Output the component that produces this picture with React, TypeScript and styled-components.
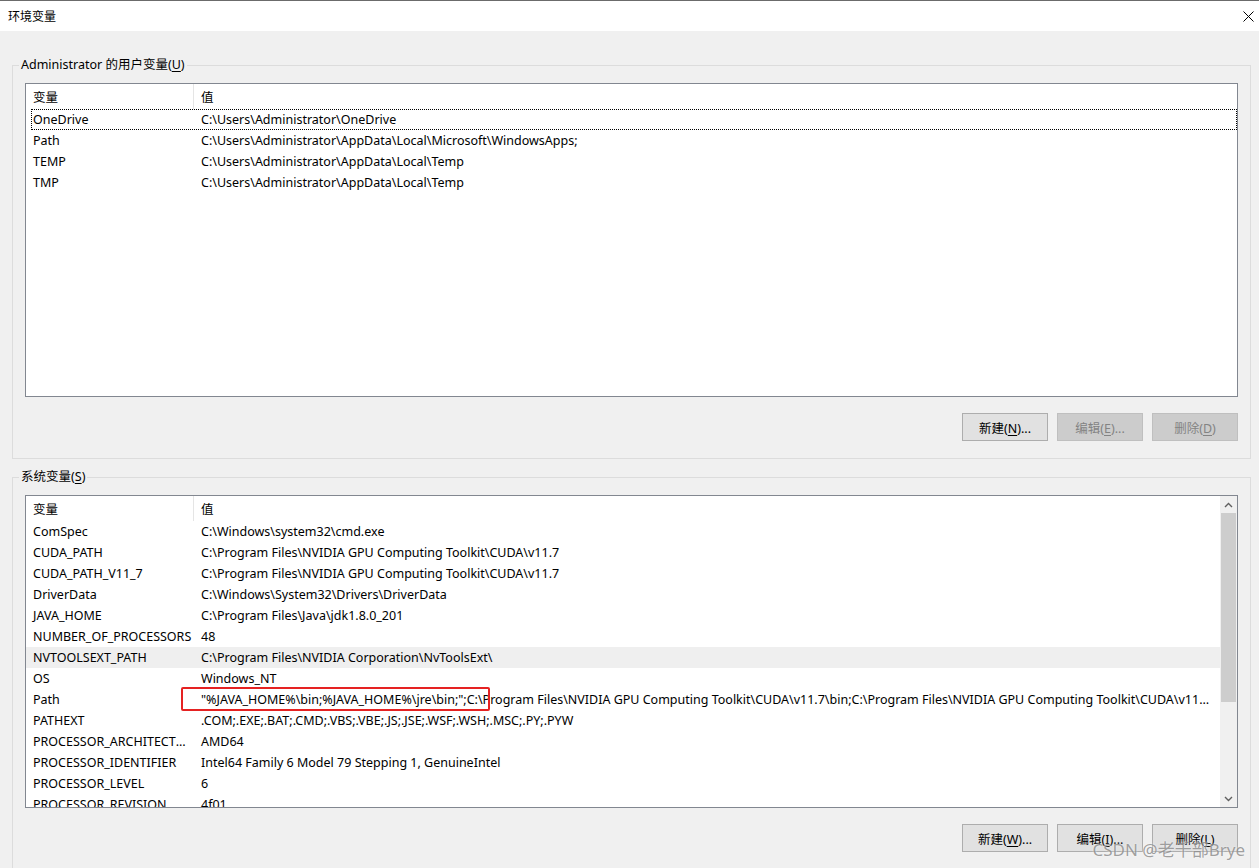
import React from "react";
import styled, { createGlobalStyle } from "styled-components";

const GlobalStyle = createGlobalStyle`
  html, body {
    margin: 0;
    padding: 0;
    background: #f0f0f0;
    overflow: hidden;
  }
  body {
    font-family: "Noto Sans", "Noto Sans CJK SC", sans-serif;
    font-size: 12.5px;
    color: #000;
  }
`;

const Window = styled.div`
  position: relative;
  width: 1259px;
  height: 868px;
  display: flex;
  flex-direction: column;
  overflow: hidden;
  background: #f0f0f0;
`;

const TitleBar = styled.div`
  height: 31px;
  flex-shrink: 0;
  box-sizing: border-box;
  border-top: 1px solid #6b6b6b;
  background: #fff;
  display: flex;
  align-items: center;
  justify-content: space-between;
  padding: 0 5px 0 8px;
  font-size: 12px;
`;

const CloseButton = styled.div`
  width: 12px;
  height: 12px;
  display: flex;
  align-items: center;
  justify-content: center;
`;

const Body = styled.div`
  flex-shrink: 0;
  padding: 26px 8px 0 12px;
  display: flex;
  flex-direction: column;
  gap: 10px;
`;

const GroupBox = styled.fieldset`
  margin: 0;
  min-width: 0;
  border: 1px solid #dcdcdc;
  padding: 10px 12px 17px 12px;
  display: flex;
  flex-direction: column;
`;

const Legend = styled.legend`
  font-size: 12.5px;
  line-height: 16px;
  padding: 0 2px;
  margin-left: -6px;
`;

const Key = styled.span`
  text-decoration: underline;
  text-underline-offset: 2px;
`;

const List = styled.div<{ height: number }>`
  height: ${({ height }) => height}px;
  flex-shrink: 0;
  box-sizing: border-box;
  border: 1px solid #828790;
  background: #fff;
  display: flex;
  overflow: hidden;
`;

const ListContent = styled.div`
  flex: 1;
  min-width: 0;
  display: flex;
  flex-direction: column;
`;

const HeaderRow = styled.div`
  height: 25px;
  display: grid;
  grid-template-columns: 168px 1fr;
  flex-shrink: 0;
`;

const HeaderCell = styled.div<{ divider?: boolean }>`
  padding-left: 7px;
  display: flex;
  align-items: center;
  border-right: ${({ divider }) => (divider ? "1px solid #e5e5e5" : "none")};
`;

const Row = styled.div<{ focused?: boolean; highlighted?: boolean }>`
  position: relative;
  height: 21px;
  flex-shrink: 0;
  display: grid;
  grid-template-columns: 168px 1fr;
  align-items: center;
  background: ${({ highlighted }) => (highlighted ? "#efefef" : "transparent")};

  &::before {
    content: "";
    display: ${({ focused }) => (focused ? "block" : "none")};
    position: absolute;
    left: 5px;
    right: 0;
    top: 0;
    bottom: 0;
    border: 1px dotted #000;
  }
`;

const Cell = styled.div`
  padding: 0 1px 0 7px;
  white-space: nowrap;
  overflow: hidden;
  text-overflow: ellipsis;
`;

const ValueCell = styled(Cell)`
  padding-right: 10px;
`;

const Marker = styled.div`
  position: absolute;
  left: 155px;
  top: -2px;
  width: 309px;
  height: 24px;
  box-sizing: border-box;
  border: 2px solid #e52222;
  border-radius: 2px;
  pointer-events: none;
`;

const ScrollBar = styled.div`
  width: 17px;
  flex-shrink: 0;
  background: #f0f0f0;
  display: flex;
  flex-direction: column;
`;

const ScrollArrow = styled.div`
  height: 17px;
  display: flex;
  align-items: center;
  justify-content: center;
  flex-shrink: 0;
`;

const ScrollTrack = styled.div`
  flex: 1;
  display: flex;
  flex-direction: column;
`;

const Thumb = styled.div`
  margin: 0 1px;
  height: 189px;
  background: #cdcdcd;
`;

const ButtonRow = styled.div`
  margin-top: 16px;
  display: flex;
  justify-content: flex-end;
  gap: 9px;
`;

const Button = styled.button`
  width: 86px;
  height: 28px;
  box-sizing: border-box;
  font-family: inherit;
  font-size: 12.5px;
  color: #000;
  background: #e1e1e1;
  border: 1px solid #adadad;
  padding: 0;

  &:disabled {
    color: #838383;
    background: #cccccc;
    border-color: #bfbfbf;
  }
`;

const Watermark = styled.div`
  position: absolute;
  right: 14px;
  bottom: 7px;
  font-size: 17px;
  color: rgba(120, 120, 120, 0.7);
  text-shadow: 0 0 2px rgba(255, 255, 255, 0.8);
  pointer-events: none;
`;

type Variable = { name: string; value: string; focused?: boolean; highlighted?: boolean; marked?: boolean };

const userVars: Variable[] = [
  { name: "OneDrive", value: "C:\\Users\\Administrator\\OneDrive", focused: true },
  { name: "Path", value: "C:\\Users\\Administrator\\AppData\\Local\\Microsoft\\WindowsApps;" },
  { name: "TEMP", value: "C:\\Users\\Administrator\\AppData\\Local\\Temp" },
  { name: "TMP", value: "C:\\Users\\Administrator\\AppData\\Local\\Temp" },
];

const systemVars: Variable[] = [
  { name: "ComSpec", value: "C:\\Windows\\system32\\cmd.exe" },
  { name: "CUDA_PATH", value: "C:\\Program Files\\NVIDIA GPU Computing Toolkit\\CUDA\\v11.7" },
  { name: "CUDA_PATH_V11_7", value: "C:\\Program Files\\NVIDIA GPU Computing Toolkit\\CUDA\\v11.7" },
  { name: "DriverData", value: "C:\\Windows\\System32\\Drivers\\DriverData" },
  { name: "JAVA_HOME", value: "C:\\Program Files\\Java\\jdk1.8.0_201" },
  { name: "NUMBER_OF_PROCESSORS", value: "48" },
  { name: "NVTOOLSEXT_PATH", value: "C:\\Program Files\\NVIDIA Corporation\\NvToolsExt\\", highlighted: true },
  { name: "OS", value: "Windows_NT" },
  {
    name: "Path",
    value:
      "\"%JAVA_HOME%\\bin;%JAVA_HOME%\\jre\\bin;\";C:\\Program Files\\NVIDIA GPU Computing Toolkit\\CUDA\\v11.7\\bin;C:\\Program Files\\NVIDIA GPU Computing Toolkit\\CUDA\\v11.7\\libnvvp;C:\\Windows\\system32",
    marked: true,
  },
  { name: "PATHEXT", value: ".COM;.EXE;.BAT;.CMD;.VBS;.VBE;.JS;.JSE;.WSF;.WSH;.MSC;.PY;.PYW" },
  { name: "PROCESSOR_ARCHITECTURE", value: "AMD64" },
  { name: "PROCESSOR_IDENTIFIER", value: "Intel64 Family 6 Model 79 Stepping 1, GenuineIntel" },
  { name: "PROCESSOR_LEVEL", value: "6" },
  { name: "PROCESSOR_REVISION", value: "4f01" },
];

const Chevron = ({ up }: { up?: boolean }) => (
  <svg width="9" height="6" viewBox="0 0 9 6">
    <path
      d={up ? "M1 5 L4.5 1.5 L8 5" : "M1 1 L4.5 4.5 L8 1"}
      fill="none"
      stroke="#606060"
      strokeWidth="1.4"
    />
  </svg>
);

const VariableRows = ({ items }: { items: Variable[] }) => (
  <>
    <HeaderRow>
      <HeaderCell divider>变量</HeaderCell>
      <HeaderCell>值</HeaderCell>
    </HeaderRow>
    {items.map((v) => (
      <Row key={v.name + v.value} focused={v.focused} highlighted={v.highlighted}>
        <Cell>{v.name}</Cell>
        <ValueCell>{v.value}</ValueCell>
        {v.marked && <Marker />}
      </Row>
    ))}
  </>
);

const App = () => {
  return (
    <Window>
      <GlobalStyle />
      <TitleBar>
        <span>环境变量</span>
        <CloseButton>
          <svg width="11" height="11" viewBox="0 0 11 11">
            <path d="M0.5 0.5 L10.5 10.5 M10.5 0.5 L0.5 10.5" stroke="#000" strokeWidth="1" />
          </svg>
        </CloseButton>
      </TitleBar>
      <Body>
        <GroupBox>
          <Legend>
            Administrator 的用户变量(<Key>U</Key>)
          </Legend>
          <List height={314}>
            <ListContent>
              <VariableRows items={userVars} />
            </ListContent>
          </List>
          <ButtonRow>
            <Button>
              新建(<Key>N</Key>)...
            </Button>
            <Button disabled>
              编辑(<Key>E</Key>)...
            </Button>
            <Button disabled>
              删除(<Key>D</Key>)
            </Button>
          </ButtonRow>
        </GroupBox>
        <GroupBox>
          <Legend>
            系统变量(<Key>S</Key>)
          </Legend>
          <List height={313}>
            <ListContent>
              <VariableRows items={systemVars} />
            </ListContent>
            <ScrollBar>
              <ScrollArrow>
                <Chevron up />
              </ScrollArrow>
              <ScrollTrack>
                <Thumb />
              </ScrollTrack>
              <ScrollArrow>
                <Chevron />
              </ScrollArrow>
            </ScrollBar>
          </List>
          <ButtonRow>
            <Button>
              新建(<Key>W</Key>)...
            </Button>
            <Button>
              编辑(<Key>I</Key>)...
            </Button>
            <Button>
              删除(<Key>L</Key>)
            </Button>
          </ButtonRow>
        </GroupBox>
      </Body>
      <Watermark>CSDN @老千部Brye</Watermark>
    </Window>
  );
};

export default App;
